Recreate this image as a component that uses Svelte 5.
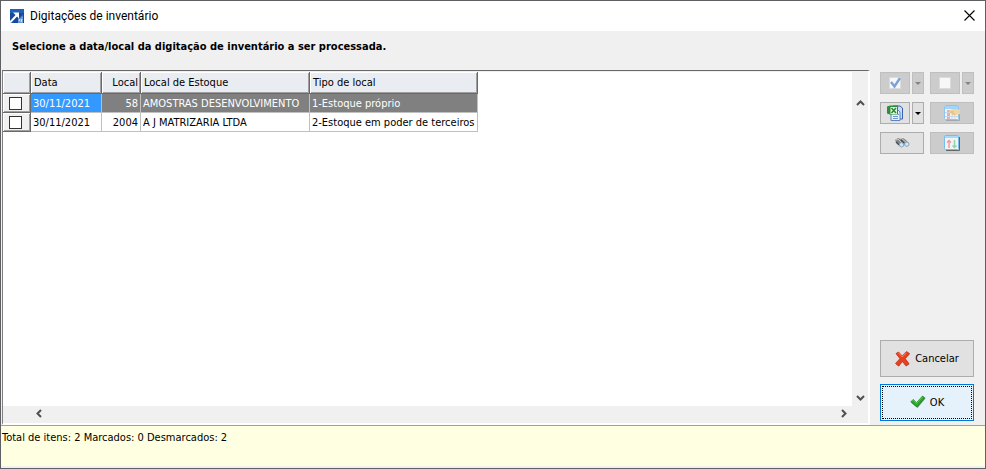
<script lang="ts">
	let rows = [
		{ data: '30/11/2021', local: 58, estoque: 'AMOSTRAS DESENVOLVIMENTO', tipo: '1-Estoque próprio', marcado: false },
		{ data: '30/11/2021', local: 2004, estoque: 'A J MATRIZARIA LTDA', tipo: '2-Estoque em poder de terceiros', marcado: false }
	];
	let selected = 0;

	$: marcados = rows.filter((r) => r.marcado).length;
</script>

<div class="window">
	<header class="titlebar">
		<svg class="logo" width="14" height="14" viewBox="0 0 14 14">
			<rect width="14" height="14" fill="#15499c" />
			<path d="M0 0h14v4H0z" fill="#2160b8" />
			<path d="M8 14v-4l1-2 1 2 1-3 1 1 1-3v9z" fill="#6d9bd8" />
			<path d="M0 13.500 7 6" fill="none" stroke="#fff" stroke-width="2" />
			<path d="M3 3.500h6v6L7 7.500 5 5.500z" fill="#fff" />
			<path d="M9 12l1-2M11 13l1-3" stroke="#e4eefb" stroke-width="1" />
		</svg>
		<h1>Digitações de inventário</h1>
		<button class="close" aria-label="Fechar">
			<svg width="11" height="11" viewBox="0 0 11 11">
				<path d="M.5.5l10 10M10.500.5l-10 10" stroke="#000" stroke-width="1.100" />
			</svg>
		</button>
	</header>

	<p class="prompt">Selecione a data/local da digitação de inventário a ser processada.</p>

	<main>
		<div class="grid">
			<div class="view">
				<table>
					<colgroup>
						<col class="c-mark" />
						<col class="c-data" />
						<col class="c-local" />
						<col class="c-estoque" />
						<col class="c-tipo" />
					</colgroup>
					<thead>
						<tr>
							<th></th>
							<th>Data</th>
							<th class="num">Local</th>
							<th>Local de Estoque</th>
							<th>Tipo de local</th>
						</tr>
					</thead>
					<tbody>
						{#each rows as row, i}
							<tr class:selected={i === selected} on:click={() => (selected = i)}>
								<td class="mark">
									<input type="checkbox" aria-label="Marcar {row.estoque}" bind:checked={row.marcado} />
								</td>
								<td class="date">{row.data}</td>
								<td class="num">{row.local}</td>
								<td>{row.estoque}</td>
								<td>{row.tipo}</td>
							</tr>
						{/each}
					</tbody>
				</table>
			</div>
			<div class="vscroll">
				<button aria-label="Rolar para cima">
					<svg width="9" height="6" viewBox="0 0 9 6"><path d="M1 5l3.500-3.500L8 5" /></svg>
				</button>
				<button aria-label="Rolar para baixo">
					<svg width="9" height="6" viewBox="0 0 9 6"><path d="M1 1l3.500 3.500L8 1" /></svg>
				</button>
			</div>
			<div class="hscroll">
				<button aria-label="Rolar para a esquerda">
					<svg width="6" height="9" viewBox="0 0 6 9"><path d="M5 1L1.500 4.500 5 8" /></svg>
				</button>
				<button aria-label="Rolar para a direita">
					<svg width="6" height="9" viewBox="0 0 6 9"><path d="M1 1l3.500 3.500L1 8" /></svg>
				</button>
			</div>
		</div>

		<aside>
			<div class="tools">
				<div class="split">
					<button class="tool" disabled aria-label="Marcar todos">
						<svg width="16" height="16" viewBox="0 0 16 16">
							<rect x="2.500" y="2.500" width="11" height="11" fill="#f7f7f7" stroke="#dcdcdc" />
							<path d="M4 7l3.500 4.500L13 3" fill="none" stroke="#7ba0dc" stroke-width="2.400" />
						</svg>
					</button>
					<button class="tool arrow" disabled aria-label="Opções de marcar">
						<svg width="6" height="3" viewBox="0 0 6 3"><path d="M0 0h6L3 3z" /></svg>
					</button>
				</div>
				<div class="split">
					<button class="tool" disabled aria-label="Desmarcar todos">
						<svg width="16" height="16" viewBox="0 0 16 16">
							<rect x="2.500" y="2.500" width="11" height="11" fill="#f7f7f7" stroke="#dcdcdc" />
						</svg>
					</button>
					<button class="tool arrow" disabled aria-label="Opções de desmarcar">
						<svg width="6" height="3" viewBox="0 0 6 3"><path d="M0 0h6L3 3z" /></svg>
					</button>
				</div>
				<div class="split">
					<button class="tool" aria-label="Exportar para Excel">
						<svg width="16" height="16" viewBox="0 0 16 16">
							<path d="M6 1h7l2.500 2v11H6z" fill="#c8dcf4" stroke="#3c62a8" />
							<path d="M4 5h7l2 2v8.500H4z" fill="#e8f1fc" stroke="#5b82c4" />
							<path d="M6 11.500h5M6 13.500h5M11 9.500h1" stroke="#6e98d4" />
							<path d="M0 1.500 3 .5h8v9H3l-3-1z" fill="#2f8d3a" />
							<path d="M3.500 2H10v7H3.500z" fill="#e9f6e4" />
							<path d="M4.500 3L9 8M9 3L4.500 8" stroke="#278734" stroke-width="1.500" />
						</svg>
					</button>
					<button class="tool arrow" aria-label="Opções de exportação">
						<svg width="6" height="3" viewBox="0 0 6 3"><path d="M0 0h6L3 3z" /></svg>
					</button>
				</div>
				<button class="tool" disabled aria-label="Configurar colunas">
					<svg width="16" height="16" viewBox="0 0 16 16">
						<path d="M2 15.500h13.500V5" fill="none" stroke="#a3a8ad" />
						<rect x=".5" y=".5" width="14" height="14" rx="1" fill="#eef4fb" stroke="#8fc4ee" />
						<path d="M1 1h13v3H1z" fill="#a1d5fa" />
						<path d="M4.500 5v9" stroke="#f1ac9c" stroke-width="3" />
						<path d="M8 10v4M11 10v4M1 7.500h6M1 11.500h13" stroke="#c9d6e8" />
						<path d="M5 6l3-2h5l3 1v4l-4 1H8L6 8z" fill="#f2d5a2" />
						<path d="M6 7h4M8 9h3" stroke="#d8b06c" stroke-width=".8" />
					</svg>
				</button>
				<button class="tool" aria-label="Localizar">
					<svg width="16" height="16" viewBox="0 0 16 16">
						<path d="M1 5l3-2 3 1 2-1 3 2 3 4-3 2-3-2-3 2-4-4z" fill="#858585" />
						<path d="M2 5l2-1 4 4M8 4l4 3" fill="none" stroke="#c9c9c9" />
						<path d="M2 7l3 3M7 5l3 3" stroke="#484848" stroke-width="1.200" />
						<circle cx="7.500" cy="9.800" r="2.200" fill="#cfe3f7" stroke="#7795b4" stroke-width=".8" />
						<circle cx="12.800" cy="9.200" r="2.200" fill="#cfe3f7" stroke="#7795b4" stroke-width=".8" />
					</svg>
				</button>
				<button class="tool" disabled aria-label="Ordenar">
					<svg width="16" height="16" viewBox="0 0 16 16">
						<path d="M2 15.500h13.500V2" fill="none" stroke="#666" />
						<rect x=".5" y=".5" width="14" height="14" rx="1" fill="#f1f3f7" stroke="#78bcee" />
						<path d="M1 1h13v2H1z" fill="#a6d9fc" />
						<path d="M5 13V5M3 7.500l2-2 2 2" fill="none" stroke="#f09c9c" stroke-width="1.500" />
						<path d="M10.500 5v8M8.500 10.500l2 2 2-2" fill="none" stroke="#8fd5a5" stroke-width="1.500" />
					</svg>
				</button>
			</div>

			<div class="actions">
				<button class="action">
					<svg width="16" height="16" viewBox="0 0 16 16">
						<path d="M4 1.500l3.500 4L12 1l3 2-4.500 5 4 5.500-3.500 2-3.500-4.500L4 15.500 1 13l4-5-4-5z" fill="#8c3a2d" opacity=".6" />
						<path d="M3.500 1l3.700 4L11.500.5l3 2L10 7.500l4 5-3 2.200-3.800-4.500L3.500 15l-3-2.500L5 7.500l-4-5z" fill="#e9411f" stroke="#c52f16" stroke-width=".7" />
						<path d="M3.500 2l3.700 4 4-4" fill="none" stroke="#ff8262" />
					</svg>
					Cancelar
				</button>
				<button class="action ok">
					<svg width="16" height="16" viewBox="0 0 16 16">
						<path d="M1 7.500L3.500 5 7 8.500 13 1.500l2.500 2L7.500 13z" fill="#476947" opacity=".7" />
						<path d="M.8 6.800L3.200 4.400l3.300 3.300L12.500 1l2.200 1.800L7 12z" fill="#28a828" stroke="#16851a" stroke-width=".7" />
						<path d="M2 6.500l1.200-1.200 3.300 3.300 6-6.600" fill="none" stroke="#69d45a" stroke-width=".8" />
					</svg>
					OK
				</button>
			</div>
		</aside>
	</main>

	<footer>Total de itens: {rows.length} Marcados: {marcados} Desmarcados: {rows.length - marcados}</footer>
</div>

<style>
	:global(body) {
		margin: 0;
	}

	.window {
		box-sizing: border-box;
		display: flex;
		flex-direction: column;
		min-height: 100vh;
		border: 1px solid #5f6064;
		background: #f0f0f0;
		color: #000;
		font: 11px/14px Tahoma, 'DejaVu Sans Condensed', sans-serif;
	}

	button {
		display: flex;
		align-items: center;
		justify-content: center;
		box-sizing: border-box;
		margin: 0;
		padding: 0;
		border: 0;
		background: none;
		color: inherit;
		font: inherit;
	}

	svg {
		flex: none;
	}

	.titlebar {
		display: flex;
		align-items: center;
		height: 30px;
		padding: 0 10px 0 9px;
		background: #fff;
	}

	.logo {
		margin-bottom: 1px;
	}

	.close {
		margin-bottom: 2px;
	}

	h1 {
		flex: 1;
		margin: 0 0 0 6px;
		font: 12px/16px 'Segoe UI', Roboto, sans-serif;
	}

	.prompt {
		margin: 0;
		padding: 9px 11px 16px;
		font-weight: bold;
	}

	main {
		display: flex;
		flex: 1;
	}

	.grid {
		display: grid;
		flex: 1;
		grid-template-columns: 1fr 16px;
		grid-template-rows: 1fr 17px;
		margin-left: 1px;
		padding-top: 1px;
		border: solid #808080;
		border-width: 1px 0 0 1px;
		border-top-color: #696969;
		border-right: 2px solid #fff;
		border-bottom: 2px solid #fff;
	}

	.view {
		background: #fff;
	}

	table {
		width: 475px;
		border-collapse: separate;
		border-spacing: 0;
		table-layout: fixed;
	}

	.c-mark {
		width: 28px;
	}

	.c-data {
		width: 71px;
	}

	.c-local {
		width: 39px;
	}

	.c-estoque {
		width: 169px;
	}

	.c-tipo {
		width: 168px;
	}

	th,
	td {
		box-sizing: border-box;
		overflow: hidden;
		white-space: nowrap;
		text-align: left;
	}

	th {
		height: 22px;
		padding: 1px 2px 0 3px;
		border: 1px solid #696969;
		border-width: 0 1px 1px 0;
		background: #e9edf1;
		box-shadow: inset 1px 1px #fff, inset -1px -1px #a0a0a0;
		font-weight: normal;
	}

	td {
		height: 19px;
		padding: 1px 2px 0;
		border: 1px solid #c0c0c0;
		border-width: 0 1px 1px 0;
	}

	.num {
		text-align: right;
	}

	.mark {
		padding: 0 0 0 6px;
		border-color: #696969;
		background: #f0f0f0;
		box-shadow: inset 1px 1px #fff, inset -1px -1px #a0a0a0;
	}

	.mark input {
		display: block;
		appearance: none;
		box-sizing: border-box;
		width: 13px;
		height: 13px;
		margin: 0;
		border: 1px solid #333;
		background: #fff;
	}

	.mark input:checked {
		box-shadow: inset 0 0 0 2px #fff;
		background: #333;
	}

	.selected td:not(.mark) {
		background: #808080;
		color: #fff;
	}

	.selected .date:not(.mark) {
		background: #3399ff;
	}

	.vscroll,
	.hscroll {
		display: flex;
		justify-content: space-between;
	}

	.vscroll {
		flex-direction: column;
		padding-top: 23px;
	}

	.vscroll button {
		height: 16px;
	}

	.hscroll {
		padding: 0 0 2px 28px;
	}

	.hscroll button {
		width: 16px;
	}

	.vscroll path,
	.hscroll path {
		fill: none;
		stroke: #505050;
		stroke-width: 2;
	}

	aside {
		display: flex;
		flex-direction: column;
		justify-content: space-between;
		padding: 2px 11px 4px 10px;
	}

	.tools {
		display: grid;
		grid-template-columns: 44px 44px;
		gap: 8px 6px;
	}

	.split {
		display: grid;
		grid-template-columns: 30px 12px;
		gap: 2px;
	}

	.tool {
		height: 22px;
		border: 1px solid #adadad;
		background: #e1e1e1;
	}

	.tool:disabled {
		border-color: #bfbfbf;
		background: #cccccc;
	}

	.arrow:disabled path {
		fill: #838383;
	}

	.actions {
		display: grid;
		gap: 7px;
	}

	.action {
		gap: 4px;
		height: 37px;
		border: 1px solid #adadad;
		background: #e1e1e1;
	}

	.ok {
		border-color: #0078d7;
		background: #e5f1fb;
		outline: 1px dotted #000;
		outline-offset: -3px;
	}

	footer {
		box-sizing: border-box;
		min-height: 43px;
		padding: 5px 1px 4px;
		border-top: 1px solid #a0a0a0;
		border-bottom: 2px solid #f0f0f0;
		background: #ffffe1;
	}
</style>
